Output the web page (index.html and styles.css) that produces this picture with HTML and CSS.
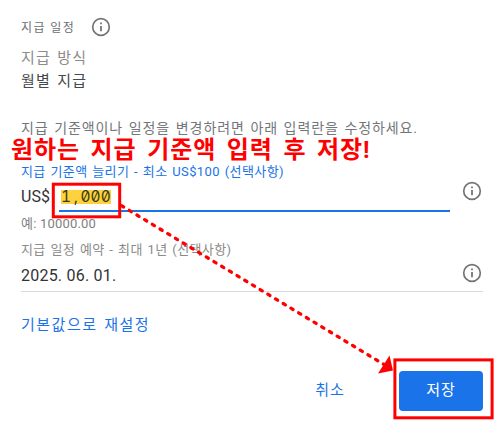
FILE: index.html
```html
<!DOCTYPE html>
<html lang="ko">
<head>
    <meta charset="UTF-8">
    <meta name="viewport" content="width=device-width, initial-scale=1.0">
    <title>지급 일정</title>
    <link rel="stylesheet" href="styles.css">
</head>
<body>

    <!-- Shared info icon -->
    <svg class="symbols" width="0" height="0">
        <symbol id="info" viewBox="0 0 20 20">
            <circle cx="10" cy="10" r="8.3" fill="none" stroke="#757575" stroke-width="1.7" />
            <path d="M9.1 9h1.8v5.2H9.1zM9.1 5.4h1.8v1.8H9.1z" fill="#757575" />
        </symbol>
    </svg>

    <main class="schedule">
        <header class="title">
            <h1><span>지급 일정</span></h1>
            <svg class="info"><use href="#info" /></svg>
        </header>

        <div class="method">
            <p class="method-label"><span>지급 방식</span></p>
            <p class="method-value"><span>월별 지급</span></p>
        </div>

        <p class="description"><span>지급 기준액이나 일정을 변경하려면 아래 입력란을 수정하세요.</span></p>

        <!-- Payment threshold -->
        <div class="field threshold">
            <p class="field-label"><span>지급 기준액 늘리기 - 최소 US$100 (선택사항)</span></p>
            <div class="field-row">
                <span class="currency">US$</span>
                <div class="amount"><mark>1<span class="comma">,</span>000</mark></div>
                <svg class="info"><use href="#info" /></svg>
            </div>
            <p class="hint"><span>예: 10000.00</span></p>
        </div>

        <!-- Scheduled date -->
        <div class="field date">
            <p class="field-label"><span>지급 일정 예약 - 최대 1년 (선택사항)</span></p>
            <div class="field-row">
                <span class="date-value">2025. 06. 01.</span>
                <svg class="info"><use href="#info" /></svg>
            </div>
        </div>

        <a class="reset"><span>기본값으로 재설정</span></a>

        <div class="actions">
            <button class="cancel">취소</button>
            <button class="save">저장</button>
        </div>
    </main>

    <!-- Red guide marks -->
    <p class="note"><span>원하는 지급 기준액 입력 후 저장!</span></p>
    <svg class="marks" width="502" height="428" viewBox="0 0 502 428">
        <rect x="53.3" y="184.2" width="66.4" height="32.6" />
        <rect x="394.9" y="359.9" width="97.2" height="57.9" />
        <line x1="121.5" y1="205.7" x2="384" y2="364.5" />
        <path d="M393 370.5L389.5 355.5L378 373.5z" />
    </svg>

</body>
</html>
```
FILE: styles.css
```css
/* Basic Reset */
* {
    margin: 0;
    padding: 0;
    box-sizing: border-box;
}

body {
    width: 502px;
    height: 428px;
    overflow: hidden;
    position: relative;
    background-color: #fff;
    color: #333;
    font-family: Roboto, "Noto Sans CJK KR", sans-serif;
    font-weight: 400;
}

p,
h1 {
    white-space: nowrap;
}

.symbols {
    position: absolute;
}

.info {
    width: 20px;
    height: 20px;
    flex: none;
}

.schedule {
    display: flex;
    flex-direction: column;
    padding: 16px 19px 0 21px;
}

/* Title */
.title {
    display: flex;
    align-items: center;
    gap: 15px;
    height: 21px;
}

.title h1 {
    width: 55px;
    font-size: 12px;
    font-weight: 400;
    letter-spacing: 1.4px;
    color: #6b6f74;
}

/* Payment method */
.method {
    margin-top: 10px;
    font-size: 15px;
    line-height: 23px;
    letter-spacing: 1.2px;
    word-spacing: 1.3px;
}

.method-label {
    color: #8c8c8c;
}

.method-value {
    color: #45494d;
}

.description {
    margin-top: 24px;
    font-size: 14px;
    line-height: 22px;
    letter-spacing: 0.9px;
    word-spacing: 1.3px;
    color: #73767a;
}

/* Fields */
.field-label {
    font-size: 13px;
    line-height: 20px;
    letter-spacing: 0.4px;
    word-spacing: 1.1px;
    color: #8a8a8a;
}

.field-row {
    display: flex;
    align-items: center;
    font-size: 16px;
}

.threshold {
    margin-top: 23px;
}

.threshold .field-label {
    color: #1a73e8;
}

.threshold .field-row {
    height: 30px;
}

.threshold .info {
    align-self: flex-start;
    margin-top: -1px;
}

.currency {
    width: 38px;
    line-height: 28px;
}

.amount {
    width: 391px;
    height: 30px;
    padding: 8px 0 0 2px;
    margin-right: 12px;
    border-bottom: 2px solid #1a73e8;
    font-family: Inter, monospace;
    font-feature-settings: "zero", "tnum";
}

.amount mark {
    display: block;
    width: 50px;
    height: 14px;
    font-size: 15.5px;
    line-height: 14px;
    white-space: nowrap;
    background-color: #fdd23e;
    color: #3a3a12;
}

.comma {
    display: inline-block;
    width: 9.5px;
    text-align: center;
}

.hint {
    margin-top: 2px;
    font-size: 13px;
    line-height: 20px;
    letter-spacing: 0.2px;
    color: #808080;
}

.date {
    margin-top: 6px;
}

.date .field-row {
    justify-content: space-between;
    height: 32px;
    padding-bottom: 1px;
    border-bottom: 1px solid #dadada;
}

.date-value {
    letter-spacing: 0.22px;
}

.date .info {
    margin: 0 1px 5px 0;
}

/* Links and buttons */
.reset {
    margin-top: 22px;
    font-size: 15px;
    line-height: 22px;
    letter-spacing: 1.5px;
    word-spacing: 1.5px;
    color: #1a73e8;
}

.actions {
    display: flex;
    justify-content: flex-end;
    gap: 27px;
    margin-top: 35px;
}

.actions button {
    width: 84px;
    height: 40px;
    padding-bottom: 5px;
    border: none;
    border-radius: 4px;
    font-family: inherit;
    font-size: 15px;
    letter-spacing: 1px;
}

.cancel {
    background: none;
    color: #1a73e8;
}

.save {
    background-color: #1a73e8;
    color: #fff;
}

/* Guide marks drawn over the form */
.note {
    position: absolute;
    left: 11px;
    top: 134px;
    font-size: 24px;
    line-height: 32px;
    font-weight: 700;
    letter-spacing: 0.9px;
    word-spacing: 3.8px;
    color: #f00;
}

.marks {
    position: absolute;
    left: 0;
    top: 0;
}

.marks rect {
    fill: none;
    stroke: #f00;
    stroke-width: 3;
}

.marks line {
    stroke: #f00;
    stroke-width: 3.3;
    stroke-dasharray: 2.5 6.5;
    stroke-linecap: round;
}

.marks path {
    fill: #f00;
}
```
